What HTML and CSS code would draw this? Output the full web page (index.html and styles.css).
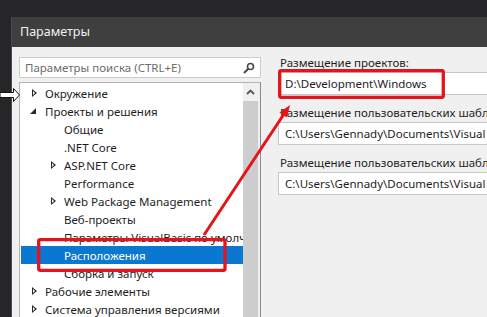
FILE: index.html
```html
<!doctype html>
<html lang="ru">

<head>
    <meta charset="UTF-8" />
    <title>Параметры</title>
    <link rel="stylesheet" href="styles.css">
</head>

<body>
    <div class="screen">
        <div class="dialog">
            <div class="dialog__title">Параметры</div>
            <div class="dialog__body">
                <div class="nav">
                    <div class="search">
                        <span class="search__placeholder">Параметры поиска (CTRL+E)</span>
                        <svg class="search__icon" width="12" height="12" viewBox="0 0 12 12">
                            <circle cx="7.5" cy="4.5" r="3" fill="none" stroke="#4a4a4a" stroke-width="1.6" />
                            <line x1="5.3" y1="6.7" x2="1" y2="11" stroke="#4a4a4a" stroke-width="2" />
                        </svg>
                    </div>
                    <div class="tree">
                        <ul class="tree__list">
                            <li class="node"><span class="node__toggle node__toggle--closed"></span>Окружение</li>
                            <li class="node"><span class="node__toggle node__toggle--open"></span>Проекты и решения</li>
                            <li class="node node--child"><span class="node__toggle"></span>Общие</li>
                            <li class="node node--child"><span class="node__toggle"></span>.NET Core</li>
                            <li class="node node--child"><span class="node__toggle node__toggle--closed"></span>ASP.NET Core</li>
                            <li class="node node--child"><span class="node__toggle"></span>Performance</li>
                            <li class="node node--child"><span class="node__toggle node__toggle--closed"></span>Web Package Management</li>
                            <li class="node node--child"><span class="node__toggle"></span>Веб-проекты</li>
                            <li class="node node--child"><span class="node__toggle"></span>Параметры VisualBasic по умолчанию</li>
                            <li class="node node--child node--selected"><span class="node__toggle"></span>Расположения</li>
                            <li class="node node--child"><span class="node__toggle"></span>Сборка и запуск</li>
                            <li class="node"><span class="node__toggle node__toggle--closed"></span>Рабочие элементы</li>
                            <li class="node"><span class="node__toggle node__toggle--closed"></span>Система управления версиями</li>
                        </ul>
                        <div class="scrollbar">
                            <div class="scrollbar__up">
                                <svg width="9" height="6" viewBox="0 0 9 6">
                                    <polyline points="1,5 4.5,1.5 8,5" fill="none" stroke="#555" stroke-width="1.8" />
                                </svg>
                            </div>
                            <div class="scrollbar__thumb"></div>
                        </div>
                    </div>
                </div>
                <div class="settings">
                    <div class="setting">
                        <div class="setting__label">Размещение проектов:</div>
                        <div class="setting__field">D:\Development\Windows</div>
                    </div>
                    <div class="setting">
                        <div class="setting__label">Размещение пользовательских шаблонов проектов:</div>
                        <div class="setting__field">C:\Users\Gennady\Documents\Visual Studio 2017\Templates\ProjectTemplates</div>
                    </div>
                    <div class="setting">
                        <div class="setting__label">Размещение пользовательских шаблонов элементов:</div>
                        <div class="setting__field">C:\Users\Gennady\Documents\Visual Studio 2017\Templates\ItemTemplates</div>
                    </div>
                </div>
            </div>
        </div>

        <svg class="pointer" width="22" height="16" viewBox="0 0 22 16">
            <polygon points="0,5.5 13.5,5.5 13.5,1.5 19.5,8 13.5,14.5 13.5,10.5 0,10.5" fill="#fff" stroke="#111"
                stroke-width="1" />
        </svg>

        <svg class="annotations" width="487" height="317" viewBox="0 0 487 317">
            <rect x="279.7" y="70.7" width="163.6" height="26.6" rx="1.5" fill="none" stroke="#e3141c"
                stroke-width="3.3" />
            <rect x="38.7" y="239.7" width="186.3" height="30.6" rx="1.5" fill="none" stroke="#e3141c"
                stroke-width="3.3" />
            <line x1="204" y1="235" x2="284" y2="114" stroke="#e3141c" stroke-width="3" />
            <polygon points="290,105 287,117.5 279.5,112.5" fill="#e3141c" />
        </svg>
    </div>
</body>

</html>
```

FILE: styles.css
```css
:root {
    --text-color: #1e1e1e;
    --panel: #f0f0f0;
    --border: #b4b4b4;
    --accent-blue: #0a78d0;
}

* {
    margin: 0;
    padding: 0;
    box-sizing: border-box;
}

body {
    margin: 0;
    background: #262628;
    font-family: 'Noto Sans', sans-serif;
    font-size: 11.5px;
    color: var(--text-color);
}

.screen {
    position: relative;
    width: 487px;
    height: 317px;
    overflow: hidden;
}

.dialog {
    margin: 17px 0 0 11px;
    height: 300px;
    background: var(--panel);
    border-left: 1px solid #4a4a4a;
}

.dialog__title {
    height: 30px;
    line-height: 30px;
    padding-left: 8px;
    background: #3f3f40;
    color: #f1f1f1;
    font-size: 12.5px;
}

.dialog__body {
    display: flex;
    gap: 17px;
    padding: 8px 0 0 7px;
}

.nav {
    width: 242px;
    flex-shrink: 0;
    margin-top: 2px;
}

.search {
    display: flex;
    align-items: center;
    justify-content: space-between;
    height: 21px;
    padding: 0 5px 0 5px;
    background: white;
    border: 1px solid #cccccc;
}

.search__placeholder {
    color: #6d6d6d;
}

.tree {
    display: flex;
    margin-top: 4px;
    height: 240px;
    background: white;
    border: 1px solid var(--border);
    border-right-color: #8a8a8a;
}

.tree__list {
    flex: 1;
    min-width: 0;
    list-style: none;
    padding-top: 1px;
}

.node {
    display: flex;
    align-items: center;
    height: 18px;
    padding-left: 9px;
    white-space: nowrap;
    overflow: hidden;
}

.node--child {
    padding-left: 28px;
}

.node--selected {
    margin-left: 1px;
    padding-left: 27px;
    background: var(--accent-blue);
    color: white;
}

.node__toggle {
    position: relative;
    flex-shrink: 0;
    width: 16px;
    height: 18px;
}

.node__toggle--closed::before {
    content: '';
    position: absolute;
    left: 3px;
    top: 5px;
    border-left: 5px solid #2b2b2b;
    border-top: 4px solid transparent;
    border-bottom: 4px solid transparent;
}

.node__toggle--closed::after {
    content: '';
    position: absolute;
    left: 4px;
    top: 7px;
    border-left: 2.5px solid white;
    border-top: 2px solid transparent;
    border-bottom: 2px solid transparent;
}

.node__toggle--open::before {
    content: '';
    position: absolute;
    left: 1px;
    top: 6px;
    border-right: 6px solid #2b2b2b;
    border-top: 6px solid transparent;
}

.scrollbar {
    width: 17px;
    flex-shrink: 0;
    background: var(--panel);
    padding-right: 2px;
}

.scrollbar__up {
    height: 17px;
    display: flex;
    align-items: center;
    justify-content: center;
}

.scrollbar__thumb {
    margin-top: 1px;
    height: 220px;
    background: #cdcdcd;
}

.settings {
    width: 240px;
    flex-shrink: 0;
}

.setting {
    margin-bottom: 10px;
}

.setting__label {
    height: 16px;
    line-height: 16px;
    margin-bottom: 1px;
    padding-left: 2px;
    white-space: nowrap;
}

.setting__field {
    height: 23px;
    line-height: 21px;
    padding-left: 6px;
    width: 260px;
    background: white;
    border: 1px solid #c6c6c6;
    white-space: nowrap;
    overflow: hidden;
}

.pointer {
    position: absolute;
    left: 0;
    top: 87px;
}

.annotations {
    position: absolute;
    left: 0;
    top: 0;
    pointer-events: none;
}
```
